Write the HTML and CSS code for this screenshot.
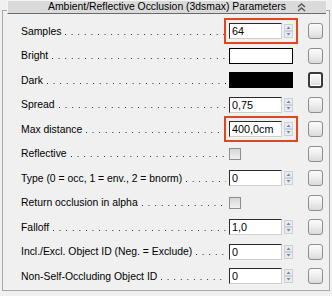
FILE: index.html
```html
<!DOCTYPE html>
<html lang="en">
<head>
  <meta charset="UTF-8" />
  <title>Ambient/Reflective Occlusion (3dsmax) Parameters</title>
  <link rel="stylesheet" href="styles.css">
</head>
<body>

<div class="panel">
  <div class="title">
    Ambient/Reflective Occlusion (3dsmax) Parameters
    <svg class="collapse" width="9" height="9" viewBox="0 0 9 9">
      <polyline points="1,4 4.5,1 8,4" />
      <polyline points="1,8 4.5,5 8,8" />
    </svg>
  </div>

  <div class="rows">
    <div class="row">
      <div class="label">Samples<span class="dots"></span></div>
      <div class="spin hl"><div class="field">64</div><div class="arrows"></div></div>
      <div class="btn"></div>
    </div>
    <div class="row">
      <div class="label">Bright<span class="dots"></span></div>
      <div class="swatch white"></div>
      <div class="btn"></div>
    </div>
    <div class="row">
      <div class="label">Dark<span class="dots"></span></div>
      <div class="swatch black"></div>
      <div class="btn active"></div>
    </div>
    <div class="row">
      <div class="label">Spread<span class="dots"></span></div>
      <div class="spin"><div class="field">0,75</div><div class="arrows"></div></div>
      <div class="btn"></div>
    </div>
    <div class="row">
      <div class="label">Max distance<span class="dots"></span></div>
      <div class="spin hl"><div class="field">400,0cm</div><div class="arrows"></div></div>
      <div class="btn"></div>
    </div>
    <div class="row">
      <div class="label">Reflective<span class="dots"></span></div>
      <div class="check-cell"><span class="check"></span></div>
      <div class="btn"></div>
    </div>
    <div class="row">
      <div class="label">Type (0 = occ, 1 = env., 2 = bnorm)<span class="dots"></span></div>
      <div class="spin"><div class="field">0</div><div class="arrows"></div></div>
      <div class="btn"></div>
    </div>
    <div class="row">
      <div class="label">Return occlusion in alpha<span class="dots"></span></div>
      <div class="check-cell"><span class="check"></span></div>
      <div class="btn"></div>
    </div>
    <div class="row">
      <div class="label">Falloff<span class="dots"></span></div>
      <div class="spin"><div class="field">1,0</div><div class="arrows"></div></div>
      <div class="btn"></div>
    </div>
    <div class="row">
      <div class="label">Incl./Excl. Object ID (Neg. = Exclude)<span class="dots"></span></div>
      <div class="spin"><div class="field">0</div><div class="arrows"></div></div>
      <div class="btn"></div>
    </div>
    <div class="row">
      <div class="label">Non-Self-Occluding Object ID<span class="dots"></span></div>
      <div class="spin"><div class="field">0</div><div class="arrows"></div></div>
      <div class="btn"></div>
    </div>
  </div>
</div>

<script>
  // spinner arrows are the same everywhere, fill them in once
  const arrowSvg = '<svg width="9" height="14" viewBox="0 0 9 14">' +
    '<rect x="0.5" y="0.5" width="8" height="6" fill="#e8ebf0" stroke="#ccd1d9"/>' +
    '<rect x="0.5" y="7.5" width="8" height="6" fill="#e8ebf0" stroke="#ccd1d9"/>' +
    '<polygon points="2.5,5 4.5,2.5 6.5,5" fill="#7886a0"/>' +
    '<polygon points="2.5,9 4.5,11.5 6.5,9" fill="#7886a0"/>' +
    '</svg>';
  document.querySelectorAll('.arrows').forEach(el => { el.innerHTML = arrowSvg; });
</script>

</body>
</html>
```

FILE: styles.css
```css
body {
  margin: 0;
  background: #f0f0f0;
  font-family: "Liberation Sans", Arial, sans-serif;
  font-size: 10.4px;
  color: #000;
  width: 332px;
  height: 296px;
  overflow: hidden;
}
.panel {
  margin: 10px 2px 0 2px;
  height: 279px;
  border: 1px solid #a8a8a8;
}
.title {
  position: relative;
  margin: -11px 3px 0 4px;
  height: 12px;
  line-height: 12px;
  text-align: center;
  background: #dadada;
  border-top: 1px solid #f4f4f4;
  border-left: 1px solid #f4f4f4;
  border-bottom: 1px solid #6a6a6a;
}
.collapse {
  position: absolute;
  right: 20px;
  top: 2px;
}
.collapse polyline {
  fill: none;
  stroke: #555;
  stroke-width: 1.4;
}
.rows {
  padding-top: 5px;
}
.row {
  display: flex;
  align-items: center;
  height: 24.5px;
  padding-left: 18px;
  padding-right: 6px;
}
.label {
  flex: 1;
  display: flex;
  align-items: baseline;
  white-space: nowrap;
  margin-right: 3px;
}
/* the dot leader is drawn as a background, one dot every 6.6px */
.dots {
  flex: 1;
  height: 9px;
  margin-left: 4px;
  background-image: linear-gradient(to right, #2a2a2a 1.2px, transparent 1.2px);
  background-size: 6.6px 1px;
  background-repeat: repeat-x;
  background-position: left bottom;
}
.spin, .swatch, .check-cell {
  width: 64px;
  flex: none;
}
.spin {
  display: flex;
  align-items: center;
  height: 16px;
}
.spin.hl {
  outline: 2px solid #e1461f;
  outline-offset: 3px;
}
.field {
  width: 50px;
  height: 14px;
  line-height: 14px;
  padding-left: 2px;
  font-size: 10.8px;
  background: #fff;
  border: 1px solid;
  border-color: #2b2b2b #cfcfcf #cfcfcf #2b2b2b;
}
.arrows {
  margin-left: 2px;
  height: 14px;
}
.swatch {
  height: 16px;
  border: 1px solid #000;
  box-sizing: border-box;
}
.swatch.white {
  background: #fff;
}
.swatch.black {
  background: #000;
}
.check {
  display: block;
  width: 10px;
  height: 10px;
  border: 1px solid #8e8e8e;
  background: linear-gradient(#d6d6d6, #f0f0f0);
}
.btn {
  flex: none;
  width: 13px;
  height: 14px;
  margin-left: 15px;
  border: 1px solid #8d8d8d;
  border-radius: 3px;
  background: linear-gradient(#fbfbfb 0%, #efefef 45%, #dadada 100%);
}
.btn.active {
  border: 2px solid #3a3a3a;
  width: 11px;
  height: 12px;
  box-shadow: inset 0 0 0 1px #fff;
}
```
